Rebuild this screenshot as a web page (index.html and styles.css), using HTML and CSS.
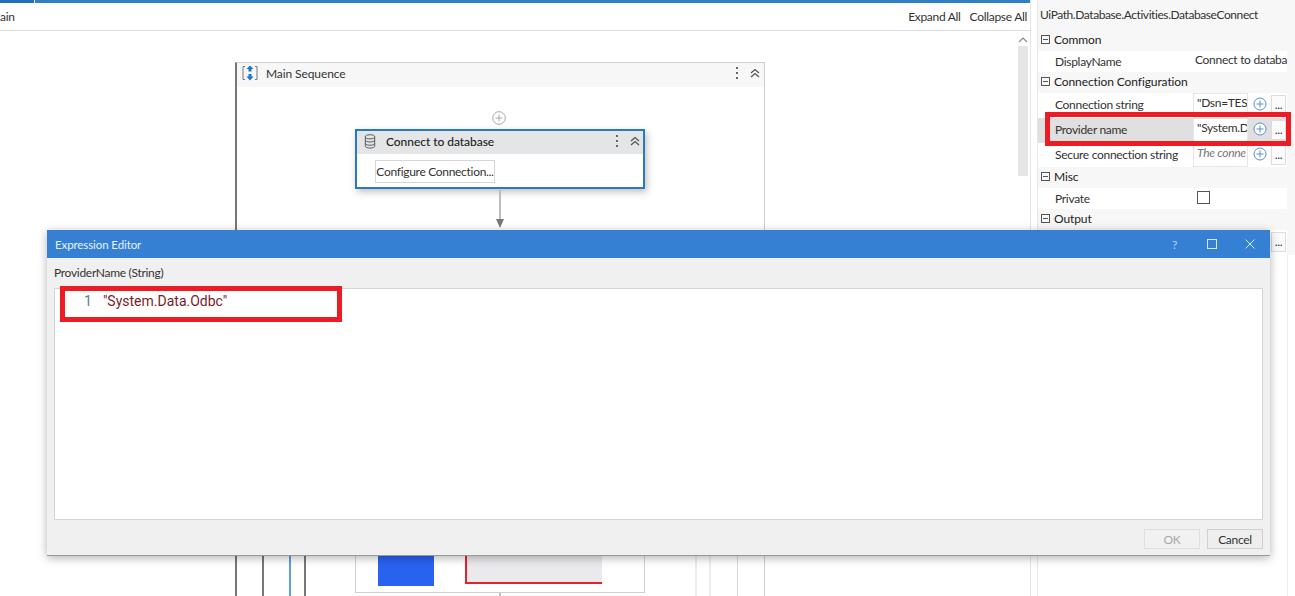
FILE: index.html
```html
<!DOCTYPE html>
<html lang="en">
<head>
<meta charset="utf-8">
<title>Expression Editor</title>
<link rel="stylesheet" href="styles.css">
</head>
<body>
<div class="app">
  <main class="designer">
    <div class="tabline"><span class="tabline-active"></span></div>
    <div class="toolbar">
      <span class="crumb">ain</span>
      <span class="toolbar-actions"><span>Expand All</span><span>Collapse All</span></span>
    </div>
    <div class="canvas-wrap">
      <div class="canvas">
        <section class="sequence">
          <header class="seq-head">
            <svg class="seq-icon" viewBox="0 0 16 16" width="16" height="16"><path d="M3 1.500H1V14.500H3M13 1.500H15V14.500H13" fill="none" stroke="#777" stroke-width="1"/><path d="M8 0.500L11.500 4H9.500V6.500H6.500V4H4.500Z M6.500 9H9.500V11.500H11.500L8 15.500L4.500 11.500H6.500Z" fill="#1b75c9"/></svg>
            <span class="seq-title">Main Sequence</span>
            <span class="dots"><i></i><i></i><i></i></span>
            <svg class="chev" viewBox="0 0 10 10" width="10" height="10"><path d="M1 5L5 1.500L9 5M1 9L5 5.500L9 9" fill="none" stroke="#555" stroke-width="1.300"/></svg>
          </header>
          <svg class="add" viewBox="0 0 14 14" width="14" height="14"><circle cx="7" cy="7" r="6.300" fill="#fff" stroke="#a9a9a9"/><path d="M7 3.500V10.500M3.500 7H10.500" stroke="#a9a9a9"/></svg>
          <article class="activity">
            <header class="act-head">
              <svg class="db" viewBox="0 0 12 16" width="12" height="15"><ellipse cx="6" cy="3" rx="5" ry="2.200" fill="none" stroke="#555"/><path d="M1 3V13C1 14.200 3.200 15 6 15S11 14.200 11 13V3M1 6.500C1 7.700 3.200 8.500 6 8.500S11 7.700 11 6.500M1 10C1 11.200 3.200 12 6 12S11 11.200 11 10" fill="none" stroke="#555"/></svg>
              <span class="act-title">Connect to database</span>
              <span class="dots"><i></i><i></i><i></i></span>
              <svg class="chev" viewBox="0 0 10 10" width="10" height="10"><path d="M1 5L5 1.500L9 5M1 9L5 5.500L9 9" fill="none" stroke="#555" stroke-width="1.300"/></svg>
            </header>
            <div class="act-body"><span class="cfg-btn">Configure Connection...</span></div>
          </article>
          <span class="connector"></span>
          <span class="arrow"></span>
        </section>
        <span class="vline dark l2"></span>
        <span class="vline blue l3"></span>
        <span class="vline dark l4"></span>
        <span class="vline faint l5"></span>
        <span class="vline faint l6"></span>
        <span class="vline light l7"></span>
        <div class="preview">
          <span class="pv-blue"></span>
          <span class="pv-gray"></span>
        </div>
        <span class="connector-low"></span>
      </div>
      <div class="scrollbar">
        <svg viewBox="0 0 10 6" width="10" height="6"><path d="M1 5L5 1L9 5" fill="none" stroke="#888" stroke-width="1.200"/></svg>
        <span class="thumb"></span>
      </div>
    </div>
  </main>
  <aside class="props">
    <div class="props-title">UiPath.Database.Activities.DatabaseConnect</div>
    <div class="group"><span class="box-minus"></span>Common</div>
    <div class="row"><span class="pname">DisplayName</span><span class="pval plain">Connect to databa</span></div>
    <div class="group"><span class="box-minus"></span>Connection Configuration</div>
    <div class="row tall"><span class="pname">Connection string</span><span class="pval">"Dsn=TES'</span><span class="pplus"><svg viewBox="0 0 14 14" width="14" height="14"><circle cx="7" cy="7" r="6" fill="#fff" stroke="#5b8fc9"/><path d="M7 3.500V10.500M3.500 7H10.500" stroke="#5b8fc9"/></svg></span><span class="pmore">...</span></div>
    <div class="row tall selected"><span class="pname">Provider name</span><span class="pval">"System.D</span><span class="pplus"><svg viewBox="0 0 14 14" width="14" height="14"><circle cx="7" cy="7" r="6" fill="#fff" stroke="#5b8fc9"/><path d="M7 3.500V10.500M3.500 7H10.500" stroke="#5b8fc9"/></svg></span><span class="pmore">...</span></div>
    <div class="row tall short"><span class="pname">Secure connection string</span><span class="pval hint">The conne</span><span class="pplus"><svg viewBox="0 0 14 14" width="14" height="14"><circle cx="7" cy="7" r="6" fill="#fff" stroke="#5b8fc9"/><path d="M7 3.500V10.500M3.500 7H10.500" stroke="#5b8fc9"/></svg></span><span class="pmore">...</span></div>
    <div class="group"><span class="box-minus"></span>Misc</div>
    <div class="row"><span class="pname single">Private</span><span class="pcheck"></span></div>
    <div class="group"><span class="box-minus"></span>Output</div>
    <div class="row tall"><span class="pname"></span><span class="pval blank"></span><span class="pplus"></span><span class="pmore">...</span></div>
    <div class="props-fill"></div>
  </aside>
</div>

<div class="callout callout-provider"></div>

<section class="dialog">
  <header class="dlg-head">
    <span class="dlg-title">Expression Editor</span>
    <span class="dlg-help">?</span>
    <svg class="dlg-max" viewBox="0 0 10 10" width="10" height="10"><rect x="0.500" y="0.500" width="9" height="9" fill="none" stroke="#dbe8f7"/></svg>
    <svg class="dlg-close" viewBox="0 0 10 10" width="10" height="10"><path d="M0.500 0.500L9.500 9.500M9.500 0.500L0.500 9.500" fill="none" stroke="#dbe8f7"/></svg>
  </header>
  <div class="dlg-body">
    <div class="dlg-label">ProviderName (String)</div>
    <div class="editor"><span class="ln">1</span><span class="code">"System.Data.Odbc"</span></div>
    <div class="dlg-actions"><span class="btn disabled">OK</span><span class="btn">Cancel</span></div>
  </div>
  <div class="callout callout-code"></div>
</section>
</body>
</html>
```
FILE: styles.css
```css
* { box-sizing: border-box; }
html, body { margin: 0; height: 100%; overflow: hidden; background: #fff; }
body { font-family: Lato, "Liberation Sans", sans-serif; font-size: 12px; letter-spacing: -0.3px; color: #333; position: relative; }
.app { display: flex; width: 1295px; height: 596px; }

.designer { width: 1031px; display: flex; flex-direction: column; border-right: 1px solid #e4e4e4; }
.tabline { height: 3px; background: #2f7fc4; flex: none; display: flex; }
.tabline-active { width: 35px; background: #1f6fbd; border-right: 1px solid #fff; }
.toolbar { height: 28px; flex: none; display: flex; justify-content: space-between; align-items: center; border-bottom: 1px solid #dcdfe3; padding: 0 3px 0 0; }
.toolbar-actions { display: flex; gap: 9px; }
.canvas-wrap { flex: 1; display: flex; min-height: 0; }
.canvas { position: relative; flex: 1; overflow: hidden; }
.scrollbar { width: 14px; display: flex; flex-direction: column; align-items: center; padding-top: 6px; gap: 3px; }
.thumb { width: 10px; height: 130px; background: #e6e6e6; }

.sequence { position: absolute; left: 235px; top: 31px; width: 530px; height: 600px; border: 1px solid #cfcfcf; border-left: 2px solid #777; }
.seq-head { height: 24px; background: #f7f7f7; display: flex; align-items: center; padding: 0 4px 4px 5px; }
.seq-icon { margin-right: 8px; }
.seq-title { flex: 1; letter-spacing: -0.1px; }
.dots { display: flex; flex-direction: column; gap: 3px; margin-right: 12px; }
.dots i { width: 2px; height: 2px; background: #666; }
.chev { flex: none; }
.add { position: absolute; left: 255px; top: 48px; }
.activity { position: absolute; left: 118px; top: 66px; width: 290px; height: 60px; border: 2px solid #2a78bd; background: #fff; box-shadow: 2px 3px 7px rgba(0,0,0,.25); }
.act-head { height: 23px; background: #e4e5e7; display: flex; align-items: center; padding: 0 3px 3px 7px; }
.db { margin-right: 10px; }
.act-title { flex: 1; font-weight: 500; color: #222; letter-spacing: -0.05px; }
.act-body { padding: 6px 0 0 18px; }
.cfg-btn { display: block; width: 120px; height: 23px; line-height: 21px; text-align: center; white-space: nowrap; border: 1px solid #d6d6d6; background: #fff; }
.connector { position: absolute; left: 262px; top: 127px; width: 2px; height: 30px; background: #bdbdbd; }
.arrow { position: absolute; left: 259px; top: 156px; border: 4px solid transparent; border-top: 9px solid #777; border-bottom: 0; }

.vline { position: absolute; top: 500px; height: 100px; width: 2px; }
.dark { background: #777; }
.blue { background: #5aa0e8; }
.light { background: #d8d8d8; width: 1px; }
.faint { background: #ececec; width: 2px; }
.l2 { left: 262px; } .l3 { left: 289px; } .l4 { left: 304px; }
.l5 { left: 695px; } .l6 { left: 709px; } .l7 { left: 737px; }
.preview { position: absolute; left: 355px; top: 500px; width: 290px; height: 62px; border: 1px solid #d0d0d0; border-top: 0; background: #fff; }
.pv-blue { position: absolute; left: 22px; top: 24px; width: 56px; height: 31px; background: #2a62f0; }
.pv-gray { position: absolute; left: 109px; top: 24px; width: 137px; height: 29px; background: #eaeaed; border-left: 2px solid #e8202a; border-bottom: 2px solid #e8202a; }
.connector-low { position: absolute; left: 499px; top: 562px; width: 2px; height: 10px; background: #bdbdbd; }

.props { width: 264px; padding-left: 7px; background: linear-gradient(90deg, #fff 6px, #e6e6e6 6px, #e6e6e6 7px, #fff 7px); display: flex; flex-direction: column; }
.props-title { height: 30px; line-height: 30px; padding-left: 2px; background: #f7f7f7; flex: none; letter-spacing: -0.42px; }
.group { height: 21px; flex: none; background: #f7f7f7; display: flex; align-items: center; font-size: 12px; letter-spacing: -0.1px; padding: 0 0 2px 3px; color: #222; }
.box-minus { width: 9px; height: 9px; border: 1px solid #555; margin-right: 4px; position: relative; }
.box-minus::after { content: ""; position: absolute; left: 1px; right: 1px; top: 3px; height: 1px; background: #555; }
.row { height: 21px; flex: none; display: flex; align-items: center; padding-left: 10px; background: #fff; border-right: 8px solid #f7f7f7; }
.row.tall { height: 25px; }
.row.tall.short { height: 24px; }
.pname { width: 145px; padding-left: 7px; flex: none; }
.tall .pname { padding-bottom: 2px; }
.selected { background: #e0e0e0; }
.pval { width: 55px; height: 100%; line-height: 17px; padding-left: 3px; background: #fff; border: 1px solid #e6e6e6; overflow: hidden; white-space: nowrap; }
.pval.plain { width: auto; border: 0; padding-left: 2px; background: transparent; line-height: 18px; }
.pval.blank { border-color: transparent; }
.hint { font-style: italic; color: #777; }
.pplus { width: 23px; display: flex; justify-content: center; padding-bottom: 3px; }
.pmore { width: 15px; height: 20px; margin-bottom: 1px; border: 1px solid #ddd; text-align: center; line-height: 18px; background: #fbfbfb; }
.pcheck { width: 13px; height: 13px; border: 1px solid #555; margin-left: 4px; margin-top: -2px; background: #fff; }
.props-fill { flex: 1; margin-right: 7px; border-right: 1px solid #ececec; }

.callout { position: absolute; border: 5px solid #ed1c24; pointer-events: none; }
.callout-provider { left: 1045px; top: 112px; width: 246px; height: 34px; }
.callout-code { left: 13px; top: 56px; width: 282px; height: 36px; }

.dialog { position: absolute; left: 47px; top: 230px; width: 1223px; height: 326px; background: #f0f0f0; border-bottom: 1px solid #999; box-shadow: 0 2px 9px rgba(0,0,0,.3); display: flex; flex-direction: column; }
.dlg-head { height: 28px; flex: none; background: #3580d2; color: #e8f0fa; display: flex; align-items: center; padding: 0 15px 0 8px; }
.dlg-title { flex: 1; font-size: 11.500px; letter-spacing: -0.1px; }
.dlg-help { margin-right: 30px; color: #bcd4ee; }
.dlg-max { margin-right: 28px; }
.dlg-body { flex: 1; display: flex; flex-direction: column; padding: 7px 7px 7px 7px; }
.dlg-label { height: 23px; }
.editor { height: 232px; background: #fff; border: 1px solid #d4d4d4; padding: 4px 0 0 29px; font-family: Roboto, sans-serif; letter-spacing: 0; font-size: 14px; display: flex; gap: 11px; }
.ln { color: #5a7d8c; }
.code { color: #7d1a28; }
.dlg-actions { display: flex; justify-content: flex-end; gap: 7px; margin-top: 9px; }
.btn { width: 56px; height: 20px; line-height: 19px; text-align: center; background: #eee; border: 1px solid #d0d0d0; }
.btn.disabled { color: #a8a8a8; background: #f1f1f1; border-color: #dedede; }
```
